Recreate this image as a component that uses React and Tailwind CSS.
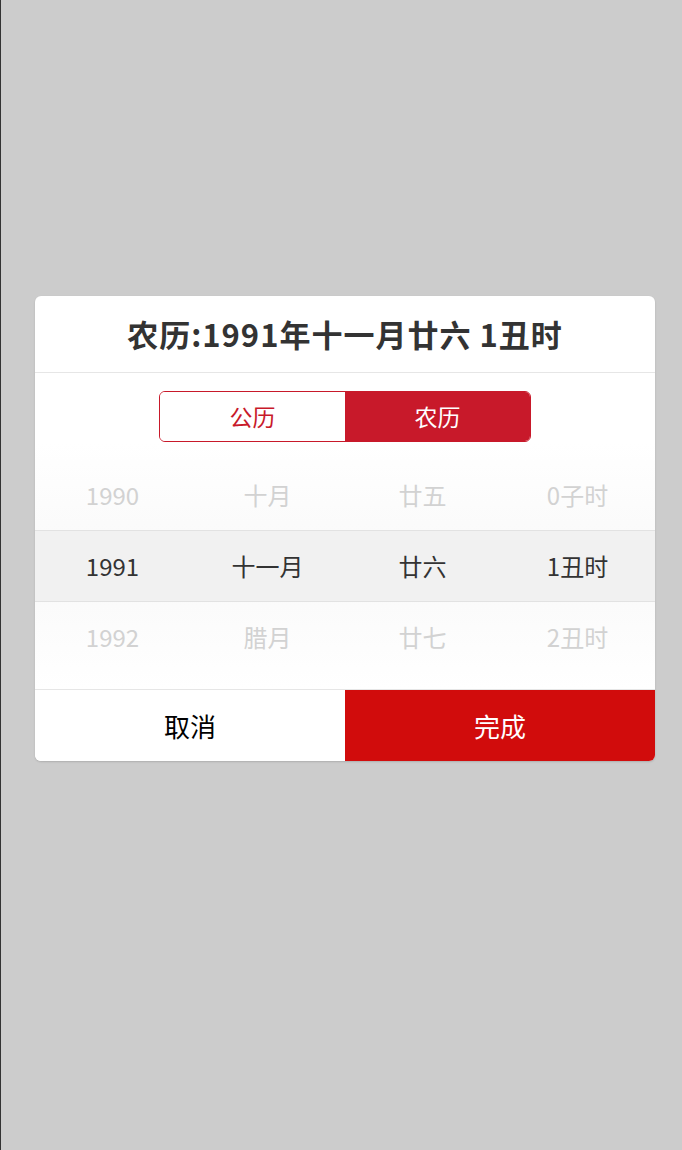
const columns = [
  ['1990', '1991', '1992'],
  ['十月', '十一月', '腊月'],
  ['廿五', '廿六', '廿七'],
  ['0子时', '1丑时', '2丑时'],
];

function Row({ index }) {
  return (
    <div className="grid grid-cols-4 h-[70px] items-center">
      {columns.map((col, i) => (
        <div key={i} className="text-center text-[24px] text-[#d2d2d2]">
          {col[index]}
        </div>
      ))}
    </div>
  );
}

export default function App() {
  return (
    <div
      className="min-h-[1150px] bg-[#cccccc] border-l border-[#333] flex flex-col items-start pl-[34px] pt-[296px]"
      style={{ fontFamily: '"Noto Sans CJK SC", "Noto Sans", sans-serif' }}
    >
      <div className="w-[620px] bg-white rounded-[6px] overflow-hidden shadow-[0_1px_2px_rgba(0,0,0,0.15)]">
        <div className="h-[77px] flex items-center justify-center border-b border-[#e6e6e6]">
          <h1 className="text-[31px] font-bold text-[#333] tracking-[1px]">农历:1991年十一月廿六 1丑时</h1>
        </div>

        <div className="flex justify-center pt-[18px]">
          <div className="flex w-[372px] h-[51px] rounded-[6px] border border-[#c8192a] overflow-hidden">
            <button className="flex-1 text-[23px] text-[#c8192a] bg-white">公历</button>
            <button className="flex-1 text-[23px] text-white bg-[#c8192a]">农历</button>
          </div>
        </div>

        <div className="pt-[18px] pb-[17px] bg-gradient-to-b from-white via-[#f9f9f9] to-white">
          <Row index={0} />
          <div className="grid grid-cols-4 h-[72px] items-center bg-[#f1f1f1] border-y border-[#e2e2e2]">
            {columns.map((col, i) => (
              <div key={i} className="text-center text-[24px] text-[#333]">
                {col[1]}
              </div>
            ))}
          </div>
          <Row index={2} />
        </div>

        <div className="flex h-[72px] border-t border-[#e6e6e6]">
          <button className="flex-1 text-[26px] text-black bg-white">取消</button>
          <button className="flex-1 text-[26px] text-white bg-[#d10c0c]">完成</button>
        </div>
      </div>
    </div>
  );
}
